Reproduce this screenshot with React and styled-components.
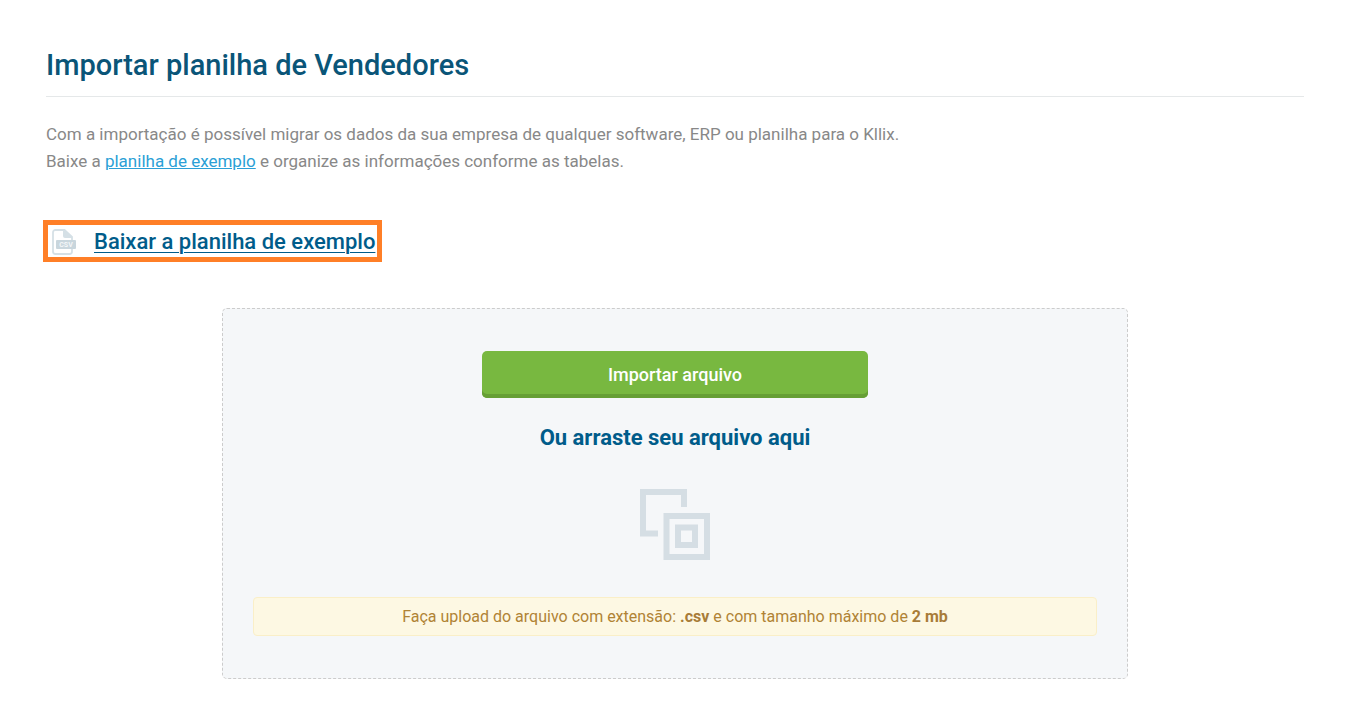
import React from 'react';
import styled, { createGlobalStyle } from 'styled-components';

const App = () => {
  return (
    <>
      <GlobalStyle />
      <Container>
        <Title>Importar planilha de Vendedores</Title>
        <Description>
          Com a importação é possível migrar os dados da sua empresa de qualquer software, ERP ou planilha para o Kllix.
          <br />
          Baixe a <a href="#planilha">planilha de exemplo</a> e organize as informações conforme as tabelas.
        </Description>
        <Download href="#planilha">
          <IconCsv />
          <span>Baixar a planilha de exemplo</span>
        </Download>
        <DropZone>
          <ImportButton type="button">Importar arquivo</ImportButton>
          <DropTitle>Ou arraste seu arquivo aqui</DropTitle>
          <IconDrop />
          <Notice>
            Faça upload do arquivo com extensão: <strong>.csv</strong> e com tamanho máximo de <strong>2 mb</strong>
          </Notice>
        </DropZone>
      </Container>
    </>
  );
};

const IconCsv = () => (
  <svg width="24" height="26" viewBox="0 0 24 26" fill="none" aria-hidden="true">
    <path
      d="M20 20v2.500a2.500 2.500 0 0 1-2.500 2.500h-14A2.500 2.500 0 0 1 1 22.500v-19A2.500 2.500 0 0 1 3.500 1H12.500l7.500 7v3"
      stroke="#d5e0e6"
      strokeWidth="1.800"
    />
    <path d="M11 1h2l7 7v1h-7a2 2 0 0 1-2-2z" fill="#d5e0e6" />
    <rect x="4" y="11" width="20" height="9" rx="1" fill="#c9d6dd" />
    <text
      x="14"
      y="18"
      textAnchor="middle"
      fontFamily="Roboto, sans-serif"
      fontSize="7"
      fontWeight="700"
      fill="#f4f7f9"
    >
      CSV
    </text>
  </svg>
);

const IconDrop = () => (
  <svg width="70" height="71" viewBox="0 0 70 71" fill="none" stroke="#d5dee4" strokeWidth="6" aria-hidden="true">
    <path d="M44 18V3H3v41.500h15" />
    <rect x="26.500" y="27" width="40.500" height="41" />
    <rect x="38" y="38.500" width="17" height="17.500" />
  </svg>
);

const GlobalStyle = createGlobalStyle`
  * {
    box-sizing: border-box;
  }
  body {
    margin: 0;
    background: #fff;
    color: #888;
    font-family: Roboto, sans-serif;
  }
`;

const Container = styled.main`
  padding: 46px;
  padding-bottom: 42px;
`;

const Title = styled.h1`
  margin: 0;
  padding-bottom: 12px;
  border-bottom: 1px solid #e5e8e9;
  color: #0a5578;
  font-size: 29px;
  font-weight: 500;
  line-height: 38px;
`;

const Description = styled.p`
  margin: 24px 0 45px;
  font-size: 17px;
  line-height: 27px;
  a {
    color: #2b9fd6;
  }
`;

const Download = styled.a`
  display: inline-flex;
  align-items: center;
  gap: 18px;
  height: 42px;
  margin-left: -3px;
  padding: 2px 2px 0 4px;
  border: 5px solid #ff7f27;
  color: #005c8a;
  font-size: 22px;
  font-weight: 500;
  line-height: 30px;
  text-decoration-thickness: 1px;
  text-underline-offset: 3px;
`;

const DropZone = styled.section`
  display: flex;
  flex-direction: column;
  align-items: center;
  width: 72%;
  margin: 46px auto 0;
  padding: 42px 30px;
  border: 1px dashed #ccc;
  border-radius: 5px;
  background: #f5f7f9;
`;

const ImportButton = styled.button`
  width: 386px;
  max-width: 100%;
  height: 47px;
  padding: 0;
  border: 0;
  border-radius: 5px;
  background: #78b840;
  box-shadow: inset 0 -4px 0 #669f35;
  color: #fff;
  font-family: inherit;
  font-size: 18px;
  font-weight: 500;
  cursor: pointer;
`;

const DropTitle = styled.h2`
  margin: 24px 0 36px;
  color: #005c8a;
  font-size: 22px;
  font-weight: 700;
  line-height: 31px;
`;

const Notice = styled.p`
  width: 100%;
  margin: 37px 0 0;
  padding: 8px;
  border: 1px solid #faefc8;
  border-radius: 4px;
  background: #fdf8e3;
  color: #b08335;
  font-size: 16px;
  line-height: 21px;
  text-align: center;
  strong {
    color: #a87c38;
  }
`;

export default App;
